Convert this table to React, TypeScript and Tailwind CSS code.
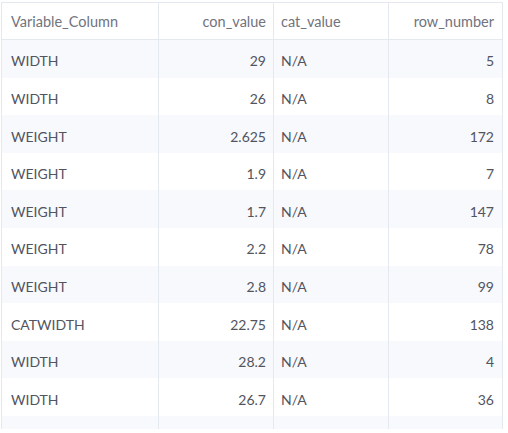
const rows: [string, string, string, string][] = [
  ['WIDTH', '29', 'N/A', '5'],
  ['WIDTH', '26', 'N/A', '8'],
  ['WEIGHT', '2.625', 'N/A', '172'],
  ['WEIGHT', '1.9', 'N/A', '7'],
  ['WEIGHT', '1.7', 'N/A', '147'],
  ['WEIGHT', '2.2', 'N/A', '78'],
  ['WEIGHT', '2.8', 'N/A', '99'],
  ['CATWIDTH', '22.75', 'N/A', '138'],
  ['WIDTH', '28.2', 'N/A', '4'],
  ['WIDTH', '26.7', 'N/A', '36'],
  ['', '', '', ''],
];

export default function App() {
  return (
    <div className="w-[508px] h-[433px] bg-white pl-px pt-[1.5px]" style={{ fontFamily: 'Lato, "Open Sans", sans-serif' }}>
      <div className="w-[502px] h-[427.5px] overflow-hidden border-x border-t border-[#e4e8ef]">
        {/* Header */}
        <div className="grid grid-cols-[157px_115px_115px_114px] h-[37.6px] border-b border-[#e4e8ef] text-[14.5px] text-[#71737d]">
          <div className="flex items-center pl-[9px] pt-[2px] border-r border-[#e4e8ef]">Variable_Column</div>
          <div className="flex items-center justify-end pr-[7px] pt-[2px] border-r border-[#e4e8ef]">con_value</div>
          <div className="flex items-center pl-[7px] pt-[2px] border-r border-[#e4e8ef]">cat_value</div>
          <div className="flex items-center justify-end pr-[9px] pt-[2px]">row_number</div>
        </div>

        {/* Body */}
        {rows.map((r, i) => (
          <div
            key={i}
            className={`grid grid-cols-[157px_115px_115px_114px] h-[37.6px] text-[14px] text-[#52545e] ${i % 2 === 0 ? 'bg-[#f7f9fc]' : 'bg-white'}`}
          >
            <div className="flex items-center pl-[9px] pt-[4px] border-r border-[#e4e8ef]">{r[0]}</div>
            <div className="flex items-center justify-end pr-[7px] pt-[4px] border-r border-[#e4e8ef]">{r[1]}</div>
            <div className="flex items-center pl-[7px] pt-[4px] border-r border-[#e4e8ef]">{r[2]}</div>
            <div className="flex items-center justify-end pr-[9px] pt-[4px]">{r[3]}</div>
          </div>
        ))}
      </div>
    </div>
  );
}
